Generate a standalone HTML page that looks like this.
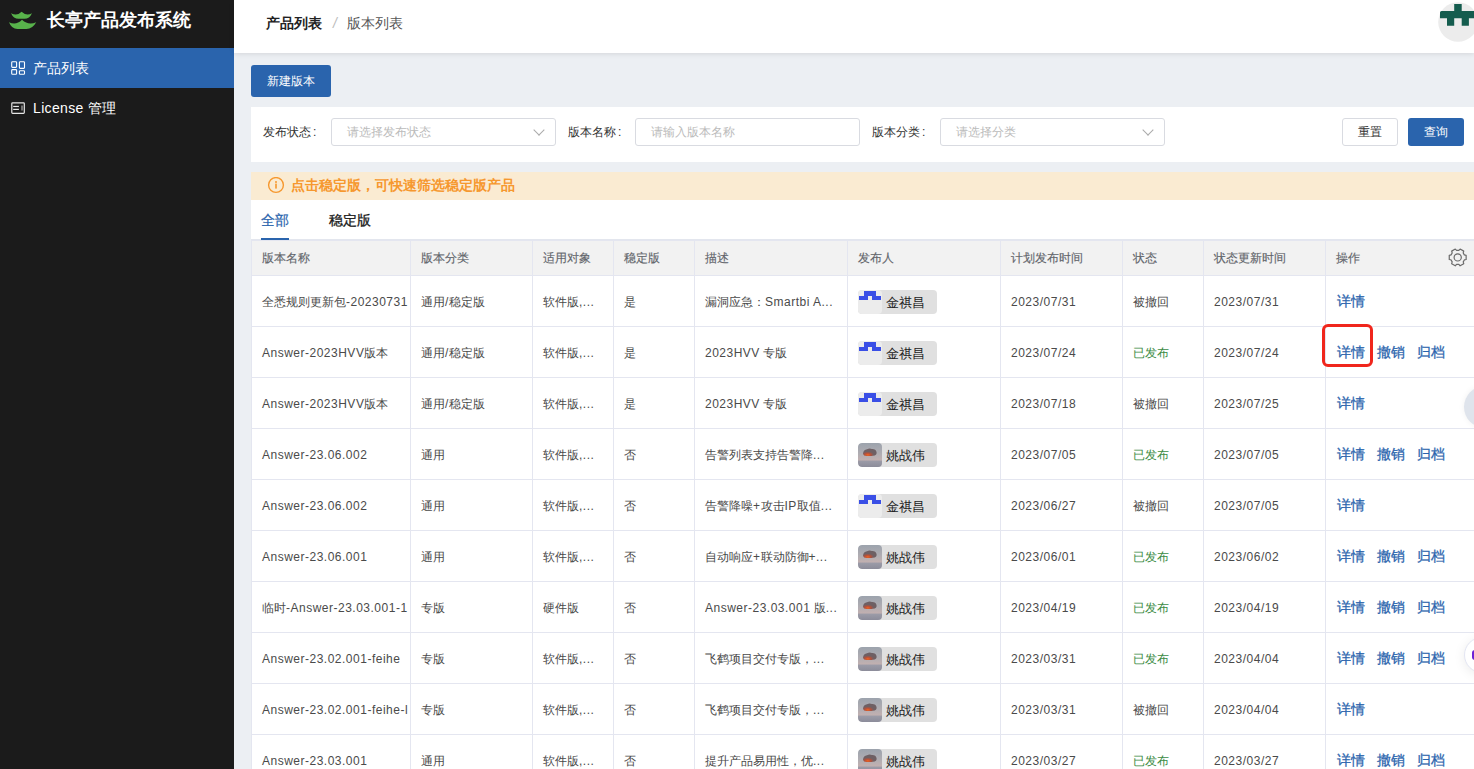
<!DOCTYPE html>
<html><head><meta charset="utf-8">
<style>
*{box-sizing:border-box;margin:0;padding:0}
html,body{width:1474px;height:769px;overflow:hidden;font-family:"Liberation Sans",sans-serif;background:#eceff3;color:#333}
.side{position:absolute;left:0;top:0;width:234px;height:769px;background:#1b1b1b}
.logo{position:absolute;left:0;top:0}
.title{position:absolute;left:47px;top:7.5px;font-size:18px;font-weight:bold;color:#fff;line-height:24px;white-space:nowrap}
.menu{position:absolute;left:0;width:234px;height:40px;color:#fff;font-size:14px;line-height:40px}
.menu .ic{position:absolute;left:8px;top:10px}
.menu span{position:absolute;left:33px;top:0}
.m1{top:48px;background:#2a64ad}
.m2{top:88px}
.head{position:absolute;left:234px;top:0;width:1240px;height:53px;background:#fff;box-shadow:0 1px 5px rgba(0,0,0,.1)}
.bc{position:absolute;left:32px;top:12px;font-size:14px;line-height:22px;white-space:nowrap}
.bc b{color:#222}
.bc .sep{color:#bbb;margin:0 10px 0 11px;font-style:italic}
.bc .cur{color:#555}
.avatar{position:absolute;left:1438px;top:2px;width:40px;height:40px;border-radius:50%;background:#eee;overflow:hidden}
.btn-new{position:absolute;left:251px;top:65px;width:80px;height:32px;background:#2a64ad;border-radius:3px;color:#fff;font-size:12px;line-height:32px;text-align:center}
.card{position:absolute;left:251px;top:107px;width:1223px;height:55px;background:#fff}
.lab{position:absolute;top:0;font-size:12px;line-height:50px;color:#333;white-space:nowrap}
.inp{position:absolute;top:11px;height:28px;border:1px solid #d9dbe1;border-radius:3px;font-size:12px;color:#bbb;line-height:26px;padding-left:15px;white-space:nowrap}
.inp .arr{position:absolute;right:12px;top:7px;width:8px;height:8px;border-right:1px solid #aaa;border-bottom:1px solid #aaa;transform:rotate(45deg)}
.btn{position:absolute;top:11px;height:28px;border-radius:3px;font-size:12px;line-height:26px;text-align:center}
.alert{position:absolute;left:251px;top:172px;width:1223px;height:28px;background:#faebd2;color:#f6982f;font-size:14px;line-height:28px;font-weight:600}
.alert .txt{position:absolute;left:40px;top:-1px;white-space:nowrap}
.tabs{position:absolute;left:251px;top:200px;width:1223px;height:40px;background:#fff;border-bottom:1px solid #e3e6ee}
.tab{position:absolute;top:0;font-size:14px;line-height:40px;white-space:nowrap}
.ink{position:absolute;left:10px;top:38px;width:28px;height:2px;background:#2a64ad}
table{position:absolute;left:251px;top:240px;width:1234px;border-collapse:collapse;table-layout:fixed;background:#fff}
td,th{border:1px solid #e4e6f0;font-size:12px;white-space:nowrap;overflow:hidden;text-align:left;font-weight:normal;padding:0 0 0 10px}
th{height:35px;background:#f2f2f2;color:#63666c;-webkit-text-stroke:0.15px #63666c}
td{height:51px;color:#4a4a4a;padding-top:2px}
.l{letter-spacing:0.5px}
.pub{color:#3c8c45}
.op{padding-left:11px;color:#2a64ad;font-size:14px;font-weight:500;letter-spacing:0.2px;-webkit-text-stroke:0.25px #2a64ad}
.op i{font-style:normal;margin-right:11.6px}
.user{display:inline-block;position:relative;top:0;width:79px;height:24px;background:#e0e0e0;border-radius:4px;font-size:13px;color:#222;line-height:26px;padding-left:28px;vertical-align:middle;letter-spacing:0.2px;overflow:hidden}
.user .av{position:absolute;left:0;top:0;width:24px;height:24px;border-radius:4px}
</style></head><body>
<div class="side">
  <svg class="logo" width="40" height="35" viewBox="0 0 40 35"><path d="M11 13.2 Q17 16.5 21.6 11.8 Q26.5 16.5 32 13.2 Q29.5 18.8 24.5 18.8 L18.5 18.8 Q13.5 18.8 11 13.2Z" fill="#58b24b"/><path d="M9 22.2 Q16 25.8 22 19.8 Q28.5 25.8 36.2 22.2 Q32.5 28.9 26.5 28.9 L17.5 28.9 Q11.5 28.9 9 22.2Z" fill="#58b24b"/></svg>
  <div class="title">长亭产品发布系统</div>
  <div class="menu m1"><svg class="ic" width="20" height="20" viewBox="0 0 20 20" fill="none" stroke="#fff" stroke-width="1.1"><rect x="3.7" y="3.7" width="4.9" height="5.7" rx="0.8"/><rect x="11.4" y="3.7" width="5.1" height="6.7" rx="0.8"/><rect x="3.7" y="11.6" width="4.9" height="4.7" rx="0.8"/><rect x="11.4" y="12.8" width="5.1" height="3.5" rx="0.8"/></svg><span>产品列表</span></div>
  <div class="menu m2"><svg class="ic" width="20" height="20" viewBox="0 0 20 20" fill="none" stroke="#e6e6e6" stroke-width="1.2"><rect x="3.8" y="4.8" width="12.5" height="10.6" rx="0.8"/><line x1="5.2" y1="8.45" x2="10.9" y2="8.45"/><line x1="5.2" y1="11.4" x2="10.9" y2="11.4"/><line x1="14" y1="7.4" x2="14" y2="12.6" stroke="#b0b0b0"/></svg><span><i style="font-style:normal;letter-spacing:0.35px">License</i> 管理</span></div>
</div>
<div class="head">
  <div class="bc"><b>产品列表</b><span class="sep">/</span><span class="cur">版本列表</span></div>
</div>
<svg style="position:absolute;left:1424px;top:0" width="50" height="50" viewBox="0 0 50 50"><circle cx="34" cy="22" r="19.8" fill="#ececec"/><path d="M30.2 4H37.7V11H50V18.2H44.9V25.7H37.7V18.2H30.2V25.7H23V18.2H16V12.5Q16 11 17.5 11H30.2Z" fill="#145c4e"/></svg>
<div class="btn-new">新建版本</div>
<div class="card">
  <div class="lab" style="left:12px">发布状态<span style="margin-left:2px">:</span></div>
  <div class="inp" style="left:80px;width:225px">请选择发布状态<i class="arr"></i></div>
  <div class="lab" style="left:317px">版本名称<span style="margin-left:2px">:</span></div>
  <div class="inp" style="left:384px;width:225px">请输入版本名称</div>
  <div class="lab" style="left:621px">版本分类<span style="margin-left:2px">:</span></div>
  <div class="inp" style="left:689px;width:225px">请选择分类<i class="arr"></i></div>
  <div class="btn" style="left:1091px;width:56px;border:1px solid #d9dbe1;color:#333">重置</div>
  <div class="btn" style="left:1157px;width:56px;background:#2a64ad;color:#fff;line-height:28px">查询</div>
</div>
<div class="alert"><svg style="position:absolute;left:16px;top:5px" width="18" height="18" viewBox="0 0 18 18"><circle cx="9" cy="8" r="7.4" fill="none" stroke="#f6982f" stroke-width="1.4"/><circle cx="9" cy="4.9" r="1" fill="#f6982f"/><rect x="8.2" y="6.6" width="1.6" height="5" fill="#f6982f"/></svg><div class="txt">点击稳定版，可快速筛选稳定版产品</div></div>
<div class="tabs"><div class="tab" style="left:10px;color:#2a64ad;-webkit-text-stroke:0.2px #2a64ad">全部</div><div class="tab" style="left:78px;color:#1a1a1a;-webkit-text-stroke:0.3px #1a1a1a">稳定版</div><div class="ink"></div></div>
<table id="tb">
<colgroup><col style="width:159px"><col style="width:122px"><col style="width:81px"><col style="width:81px"><col style="width:153px"><col style="width:153px"><col style="width:122px"><col style="width:81px"><col style="width:122px"><col style="width:160px"></colgroup>
<tr><th>版本名称</th><th>版本分类</th><th>适用对象</th><th>稳定版</th><th>描述</th><th>发布人</th><th>计划发布时间</th><th>状态</th><th>状态更新时间</th><th>操作</th></tr>
<tr><td>全悉规则更新包<span class="l">-20230731</span></td><td>通用<span class="l">/</span>稳定版</td><td>软件版<span class="l">,...</span></td><td>是</td><td>漏洞应急：<span class="l">Smartbi A...</span></td><td><span class="user"><svg class="av" width="24" height="24" viewBox="0 0 24 24"><rect width="24" height="24" fill="#ececec"/><path d="M6 1H18V6H23V10H14V6H10V10H1V6H6Z" fill="#3a4fe6"/></svg>金祺昌</span></td><td><span class="l">2023/07/31</span></td><td>被撤回</td><td><span class="l">2023/07/31</span></td><td class="op"><i>详情</i></td></tr>
<tr><td><span class="l">Answer-2023HVV</span>版本</td><td>通用<span class="l">/</span>稳定版</td><td>软件版<span class="l">,...</span></td><td>是</td><td><span class="l">2023HVV</span> 专版</td><td><span class="user"><svg class="av" width="24" height="24" viewBox="0 0 24 24"><rect width="24" height="24" fill="#ececec"/><path d="M6 1H18V6H23V10H14V6H10V10H1V6H6Z" fill="#3a4fe6"/></svg>金祺昌</span></td><td><span class="l">2023/07/24</span></td><td class="pub">已发布</td><td><span class="l">2023/07/24</span></td><td class="op"><i>详情</i><i>撤销</i><i>归档</i></td></tr>
<tr><td><span class="l">Answer-2023HVV</span>版本</td><td>通用<span class="l">/</span>稳定版</td><td>软件版<span class="l">,...</span></td><td>是</td><td><span class="l">2023HVV</span> 专版</td><td><span class="user"><svg class="av" width="24" height="24" viewBox="0 0 24 24"><rect width="24" height="24" fill="#ececec"/><path d="M6 1H18V6H23V10H14V6H10V10H1V6H6Z" fill="#3a4fe6"/></svg>金祺昌</span></td><td><span class="l">2023/07/18</span></td><td>被撤回</td><td><span class="l">2023/07/25</span></td><td class="op"><i>详情</i></td></tr>
<tr><td><span class="l">Answer-23.06.002</span></td><td>通用</td><td>软件版<span class="l">,...</span></td><td>否</td><td>告警列表支持告警降<span class="l">...</span></td><td><span class="user"><svg class="av" width="24" height="24" viewBox="0 0 24 24"><defs><linearGradient id="g" x1="0" y1="0" x2="0" y2="1"><stop offset="0" stop-color="#9ca3ad"/><stop offset="0.45" stop-color="#b0adb2"/><stop offset="0.72" stop-color="#c2b0b0"/><stop offset="0.74" stop-color="#9c9ca8"/><stop offset="1" stop-color="#8c8c9a"/></linearGradient><radialGradient id="c" cx="0.35" cy="0.85" r="0.55"><stop offset="0" stop-color="#f2641e"/><stop offset="0.4" stop-color="#b5503a"/><stop offset="0.8" stop-color="#6e6064"/><stop offset="1" stop-color="#6e6064"/></radialGradient></defs><rect width="24" height="24" fill="url(#g)"/><path d="M5 10.5 Q5.5 6.5 9 6.2 Q11.5 4.8 14 6 Q17.8 5.8 18.6 9.2 Q19 12.5 15 12.8 Q12 13.2 10 12.9 Q5.5 13.5 5 10.5Z" fill="url(#c)"/></svg>姚战伟</span></td><td><span class="l">2023/07/05</span></td><td class="pub">已发布</td><td><span class="l">2023/07/05</span></td><td class="op"><i>详情</i><i>撤销</i><i>归档</i></td></tr>
<tr><td><span class="l">Answer-23.06.002</span></td><td>通用</td><td>软件版<span class="l">,...</span></td><td>否</td><td>告警降噪<span class="l">+</span>攻击<span class="l">IP</span>取值<span class="l">...</span></td><td><span class="user"><svg class="av" width="24" height="24" viewBox="0 0 24 24"><rect width="24" height="24" fill="#ececec"/><path d="M6 1H18V6H23V10H14V6H10V10H1V6H6Z" fill="#3a4fe6"/></svg>金祺昌</span></td><td><span class="l">2023/06/27</span></td><td>被撤回</td><td><span class="l">2023/07/05</span></td><td class="op"><i>详情</i></td></tr>
<tr><td><span class="l">Answer-23.06.001</span></td><td>通用</td><td>软件版<span class="l">,...</span></td><td>否</td><td>自动响应<span class="l">+</span>联动防御<span class="l">+...</span></td><td><span class="user"><svg class="av" width="24" height="24" viewBox="0 0 24 24"><defs><linearGradient id="g" x1="0" y1="0" x2="0" y2="1"><stop offset="0" stop-color="#9ca3ad"/><stop offset="0.45" stop-color="#b0adb2"/><stop offset="0.72" stop-color="#c2b0b0"/><stop offset="0.74" stop-color="#9c9ca8"/><stop offset="1" stop-color="#8c8c9a"/></linearGradient><radialGradient id="c" cx="0.35" cy="0.85" r="0.55"><stop offset="0" stop-color="#f2641e"/><stop offset="0.4" stop-color="#b5503a"/><stop offset="0.8" stop-color="#6e6064"/><stop offset="1" stop-color="#6e6064"/></radialGradient></defs><rect width="24" height="24" fill="url(#g)"/><path d="M5 10.5 Q5.5 6.5 9 6.2 Q11.5 4.8 14 6 Q17.8 5.8 18.6 9.2 Q19 12.5 15 12.8 Q12 13.2 10 12.9 Q5.5 13.5 5 10.5Z" fill="url(#c)"/></svg>姚战伟</span></td><td><span class="l">2023/06/01</span></td><td class="pub">已发布</td><td><span class="l">2023/06/02</span></td><td class="op"><i>详情</i><i>撤销</i><i>归档</i></td></tr>
<tr><td>临时<span class="l">-Answer-23.03.001-1</span></td><td>专版</td><td>硬件版</td><td>否</td><td><span class="l">Answer-23.03.001</span> 版<span class="l">...</span></td><td><span class="user"><svg class="av" width="24" height="24" viewBox="0 0 24 24"><defs><linearGradient id="g" x1="0" y1="0" x2="0" y2="1"><stop offset="0" stop-color="#9ca3ad"/><stop offset="0.45" stop-color="#b0adb2"/><stop offset="0.72" stop-color="#c2b0b0"/><stop offset="0.74" stop-color="#9c9ca8"/><stop offset="1" stop-color="#8c8c9a"/></linearGradient><radialGradient id="c" cx="0.35" cy="0.85" r="0.55"><stop offset="0" stop-color="#f2641e"/><stop offset="0.4" stop-color="#b5503a"/><stop offset="0.8" stop-color="#6e6064"/><stop offset="1" stop-color="#6e6064"/></radialGradient></defs><rect width="24" height="24" fill="url(#g)"/><path d="M5 10.5 Q5.5 6.5 9 6.2 Q11.5 4.8 14 6 Q17.8 5.8 18.6 9.2 Q19 12.5 15 12.8 Q12 13.2 10 12.9 Q5.5 13.5 5 10.5Z" fill="url(#c)"/></svg>姚战伟</span></td><td><span class="l">2023/04/19</span></td><td class="pub">已发布</td><td><span class="l">2023/04/19</span></td><td class="op"><i>详情</i><i>撤销</i><i>归档</i></td></tr>
<tr><td><span class="l">Answer-23.02.001-feihe</span></td><td>专版</td><td>软件版<span class="l">,...</span></td><td>否</td><td>飞鹤项目交付专版，<span class="l">...</span></td><td><span class="user"><svg class="av" width="24" height="24" viewBox="0 0 24 24"><defs><linearGradient id="g" x1="0" y1="0" x2="0" y2="1"><stop offset="0" stop-color="#9ca3ad"/><stop offset="0.45" stop-color="#b0adb2"/><stop offset="0.72" stop-color="#c2b0b0"/><stop offset="0.74" stop-color="#9c9ca8"/><stop offset="1" stop-color="#8c8c9a"/></linearGradient><radialGradient id="c" cx="0.35" cy="0.85" r="0.55"><stop offset="0" stop-color="#f2641e"/><stop offset="0.4" stop-color="#b5503a"/><stop offset="0.8" stop-color="#6e6064"/><stop offset="1" stop-color="#6e6064"/></radialGradient></defs><rect width="24" height="24" fill="url(#g)"/><path d="M5 10.5 Q5.5 6.5 9 6.2 Q11.5 4.8 14 6 Q17.8 5.8 18.6 9.2 Q19 12.5 15 12.8 Q12 13.2 10 12.9 Q5.5 13.5 5 10.5Z" fill="url(#c)"/></svg>姚战伟</span></td><td><span class="l">2023/03/31</span></td><td class="pub">已发布</td><td><span class="l">2023/04/04</span></td><td class="op"><i>详情</i><i>撤销</i><i>归档</i></td></tr>
<tr><td><span class="l">Answer-23.02.001-feihe-l</span></td><td>专版</td><td>软件版<span class="l">,...</span></td><td>否</td><td>飞鹤项目交付专版，<span class="l">...</span></td><td><span class="user"><svg class="av" width="24" height="24" viewBox="0 0 24 24"><defs><linearGradient id="g" x1="0" y1="0" x2="0" y2="1"><stop offset="0" stop-color="#9ca3ad"/><stop offset="0.45" stop-color="#b0adb2"/><stop offset="0.72" stop-color="#c2b0b0"/><stop offset="0.74" stop-color="#9c9ca8"/><stop offset="1" stop-color="#8c8c9a"/></linearGradient><radialGradient id="c" cx="0.35" cy="0.85" r="0.55"><stop offset="0" stop-color="#f2641e"/><stop offset="0.4" stop-color="#b5503a"/><stop offset="0.8" stop-color="#6e6064"/><stop offset="1" stop-color="#6e6064"/></radialGradient></defs><rect width="24" height="24" fill="url(#g)"/><path d="M5 10.5 Q5.5 6.5 9 6.2 Q11.5 4.8 14 6 Q17.8 5.8 18.6 9.2 Q19 12.5 15 12.8 Q12 13.2 10 12.9 Q5.5 13.5 5 10.5Z" fill="url(#c)"/></svg>姚战伟</span></td><td><span class="l">2023/03/31</span></td><td>被撤回</td><td><span class="l">2023/04/04</span></td><td class="op"><i>详情</i></td></tr>
<tr><td><span class="l">Answer-23.03.001</span></td><td>通用</td><td>软件版<span class="l">,...</span></td><td>否</td><td>提升产品易用性，优<span class="l">...</span></td><td><span class="user"><svg class="av" width="24" height="24" viewBox="0 0 24 24"><defs><linearGradient id="g" x1="0" y1="0" x2="0" y2="1"><stop offset="0" stop-color="#9ca3ad"/><stop offset="0.45" stop-color="#b0adb2"/><stop offset="0.72" stop-color="#c2b0b0"/><stop offset="0.74" stop-color="#9c9ca8"/><stop offset="1" stop-color="#8c8c9a"/></linearGradient><radialGradient id="c" cx="0.35" cy="0.85" r="0.55"><stop offset="0" stop-color="#f2641e"/><stop offset="0.4" stop-color="#b5503a"/><stop offset="0.8" stop-color="#6e6064"/><stop offset="1" stop-color="#6e6064"/></radialGradient></defs><rect width="24" height="24" fill="url(#g)"/><path d="M5 10.5 Q5.5 6.5 9 6.2 Q11.5 4.8 14 6 Q17.8 5.8 18.6 9.2 Q19 12.5 15 12.8 Q12 13.2 10 12.9 Q5.5 13.5 5 10.5Z" fill="url(#c)"/></svg>姚战伟</span></td><td><span class="l">2023/03/27</span></td><td class="pub">已发布</td><td><span class="l">2023/03/27</span></td><td class="op"><i>详情</i><i>撤销</i><i>归档</i></td></tr>
</table>
<svg style="position:absolute;left:1440px;top:242px" width="34" height="30" viewBox="0 0 34 30"><path d="M24.33 12.86 L26.14 13.30 L26.14 17.50 L24.33 17.94 L23.22 19.87 L23.74 21.66 L20.10 23.76 L18.81 22.41 L16.59 22.41 L15.30 23.76 L11.66 21.66 L12.18 19.87 L11.07 17.94 L9.26 17.50 L9.26 13.30 L11.07 12.86 L12.18 10.93 L11.66 9.14 L15.30 7.04 L16.59 8.39 L18.81 8.39 L20.10 7.04 L23.74 9.14 L23.22 10.93Z" fill="none" stroke="#6b6b6b" stroke-width="1.2" stroke-linejoin="round"/><circle cx="17.7" cy="15.4" r="3.6" fill="none" stroke="#6b6b6b" stroke-width="1.2"/></svg>
<div style="position:absolute;left:1322px;top:324px;width:51px;height:43px;border:3px solid #f0261c;border-radius:6px"></div>
<div style="position:absolute;left:1464px;top:386px;width:42px;height:42px;border-radius:50%;background:#dfe4ec;box-shadow:0 0 6px rgba(0,0,0,.06)"></div>
<div style="position:absolute;left:1464px;top:637px;width:36px;height:36px;border-radius:50%;background:#fff;border:1px solid #e3e6f3;box-shadow:0 2px 12px rgba(0,0,0,.08)"></div>
<div style="position:absolute;left:1472px;top:650px;width:6px;height:10px;border-radius:3px 0 0 3px;background:#6c21d6"></div>
</body></html>
